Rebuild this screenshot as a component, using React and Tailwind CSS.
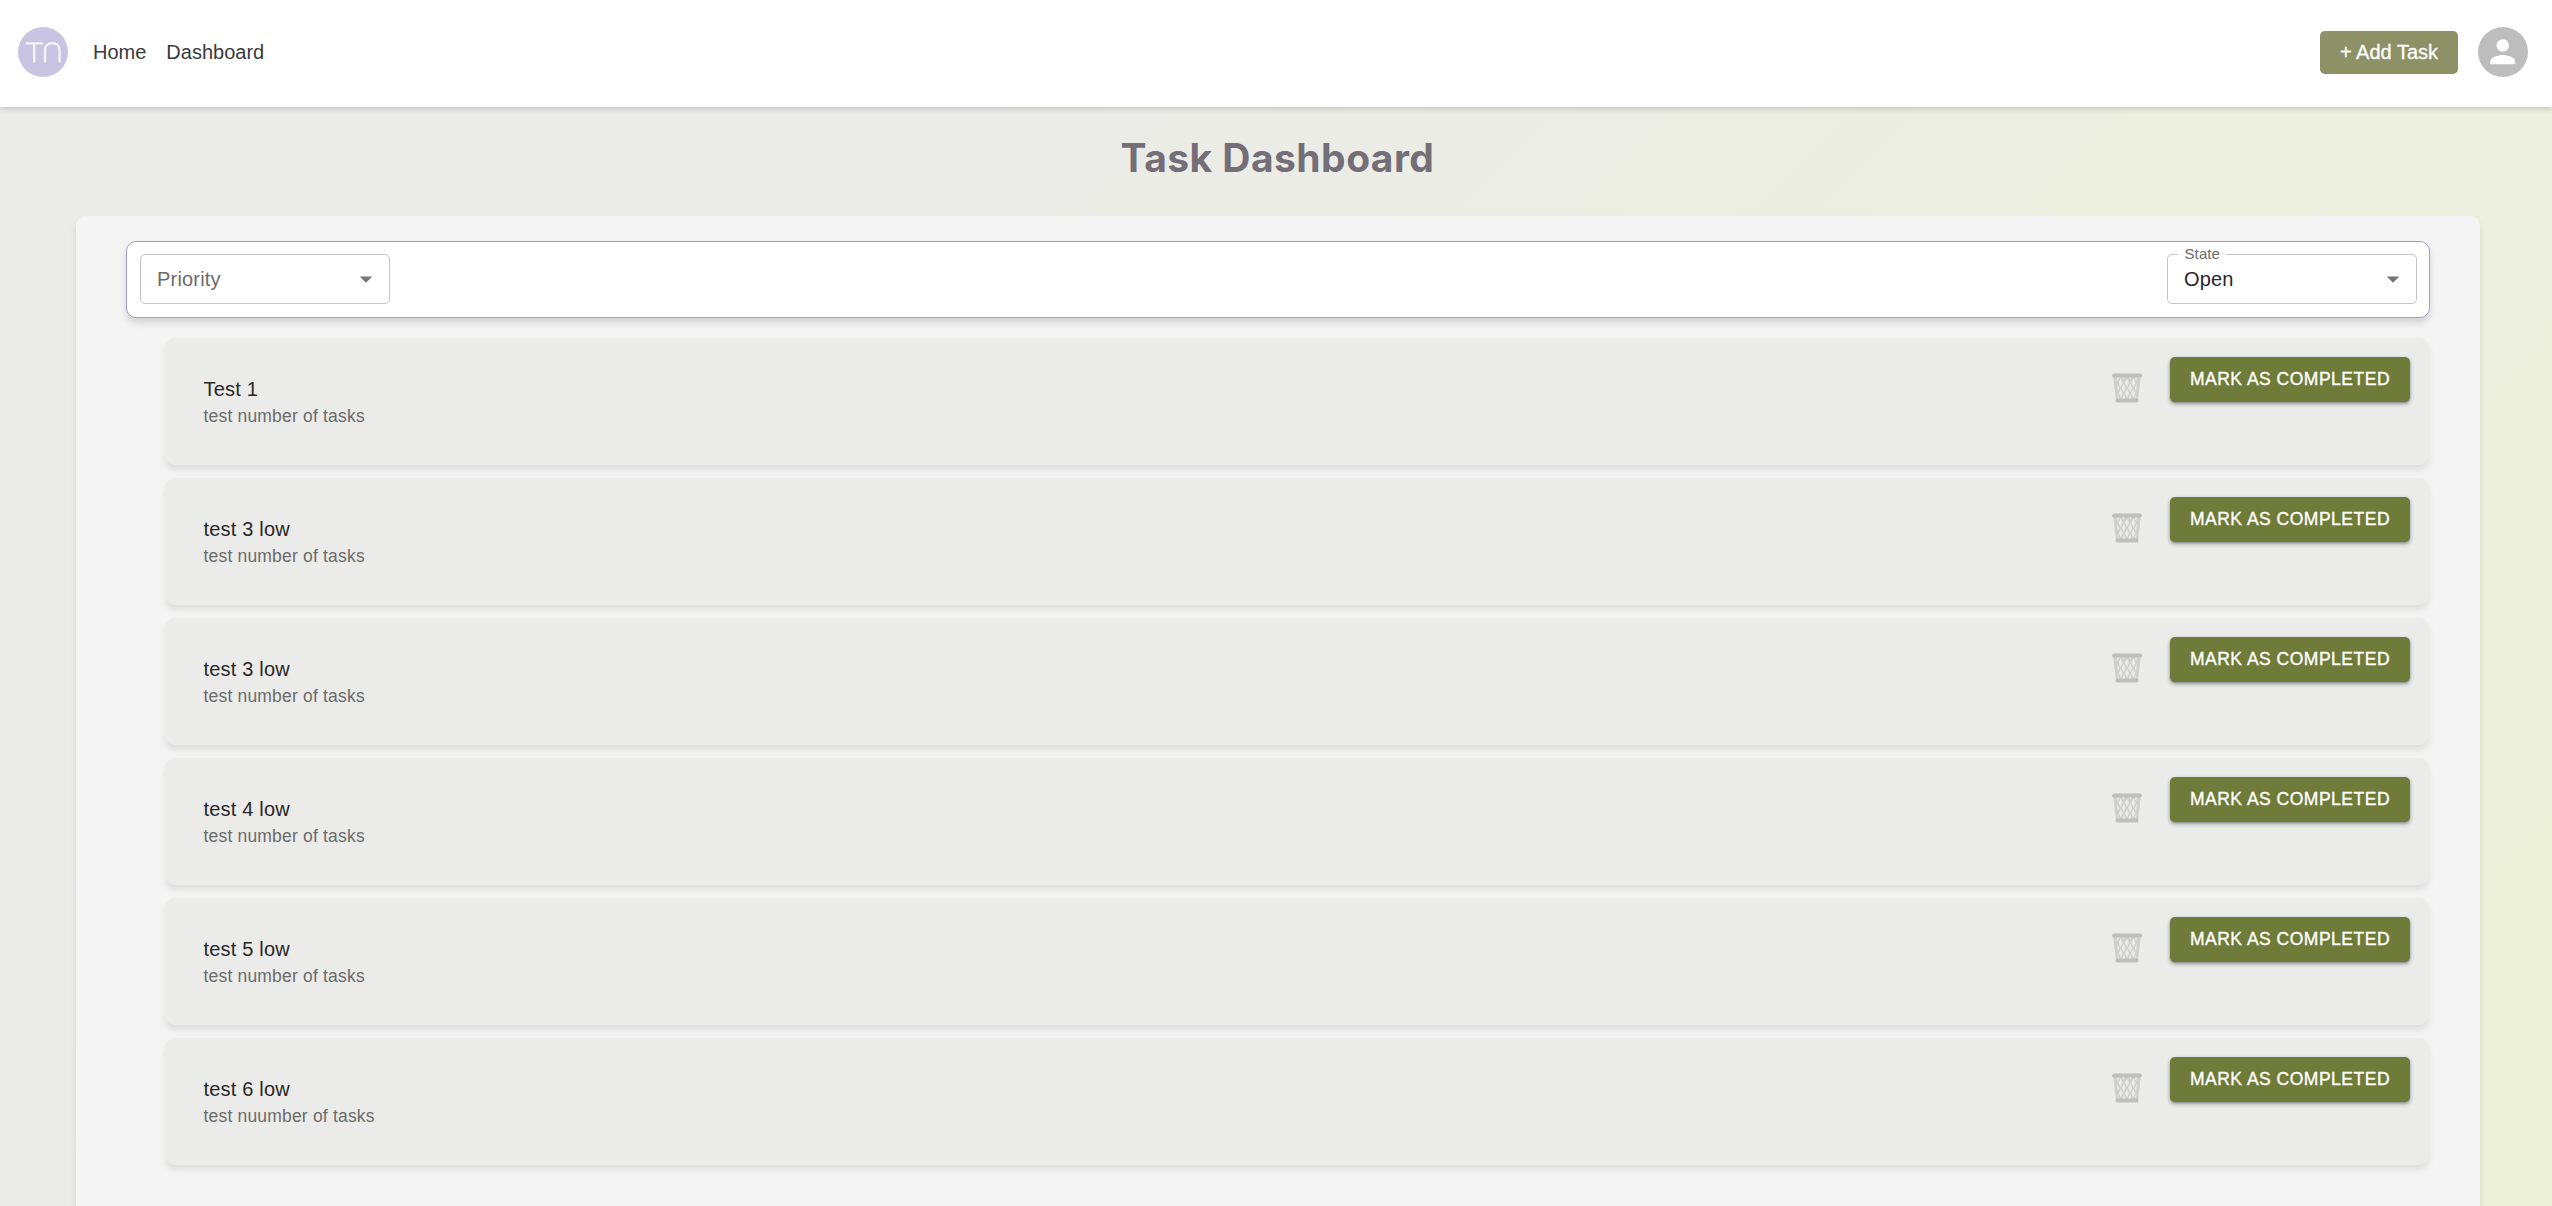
const tasks = [
  { title: 'Test 1', note: 'test number of tasks' },
  { title: 'test 3 low', note: 'test number of tasks' },
  { title: 'test 3 low', note: 'test number of tasks' },
  { title: 'test 4 low', note: 'test number of tasks' },
  { title: 'test 5 low', note: 'test number of tasks' },
  { title: 'test 6 low', note: 'test nuumber of tasks' },
];

function Logo() {
  return (
    <svg className="size-[50px]" viewBox="0 0 50 50" fill="none">
      <circle cx="25" cy="25" r="25" fill="#cac4e3" />
      <path
        d="M8.500 16.300H24M16.200 16.300V34.500M27 34.500V23.500C27 18.800 30.200 16.200 34.300 16.200S41.600 18.800 41.600 23.500V34.500"
        stroke="#f6f4fc"
        strokeWidth="2.3"
        strokeLinecap="round"
      />
    </svg>
  );
}

function Avatar() {
  return (
    <div className="flex size-[50px] items-center justify-center rounded-full bg-[#bdbdbd]">
      <svg className="size-[37.5px]" viewBox="0 0 24 24" fill="#fff">
        <path d="M12 12c2.210 0 4-1.790 4-4s-1.790-4-4-4-4 1.790-4 4 1.790 4 4 4m0 2c-2.670 0-8 1.340-8 4v2h16v-2c0-2.660-5.330-4-8-4" />
      </svg>
    </div>
  );
}

function Trash() {
  return (
    <svg className="mt-4 size-[30px]" viewBox="0 0 30 30" fill="none">
      <path d="M1.200 3.500L4 27H26L28.800 3.500Z" fill="#cfcfce" />
      <g fill="#ebebe9">
        <path d="M4.600 4h2.800l-1.600 4z M10 4h3l-1.500 2.600z M16.800 4h3l-1.500 2.600z M22.600 4h2.800l-1.200 4z" />
        <path d="M8.600 5.500l2 4.200-2 4.200-2-4.200z M15 5.500l2 4.200-2 4.200-2-4.200z M21.400 5.500l2 4.200-2 4.200-2-4.200z" />
        <path d="M11.800 10.700l2 4.200-2 4.200-2-4.200z M18.200 10.700l2 4.200-2 4.200-2-4.200z M5.100 10.500l2.300 4.400-1.500 3.600z M24.900 10.500l-2.300 4.400 1.500 3.600z" />
        <path d="M8.800 16l2 4.200-2 4.200-2-4.200z M15 16l2 4.200-2 4.200-2-4.200z M21.200 16l2 4.200-2 4.200-2-4.200z" />
        <path d="M11.900 21.500l1.700 4.500h-3.400z M18.100 21.500l1.700 4.500h-3.400z M6.200 21.500l1.500 4.500h-1.200z M23.800 21.500l-1.500 4.500h1.200z" />
      </g>
      <rect x="0" y="0.500" width="30" height="4" rx="2" fill="#bebebd" />
      <rect x="3.500" y="25.500" width="23" height="4" rx="2" fill="#bebebd" />
    </svg>
  );
}

function Caret() {
  return (
    <svg className="size-[30px]" viewBox="0 0 24 24" fill="#757575">
      <path d="M7 10l5 5 5-5z" />
    </svg>
  );
}

function Select({ label, value }) {
  return (
    <div className="relative flex h-[50px] w-[250px] items-center justify-between rounded-[5px] border border-[#c4c4c4] pr-[8px] pl-[16px]">
      {value ? (
        <>
          <span className="absolute top-[-11px] left-[10px] bg-white pr-[6px] pl-[6.5px] text-[15px] leading-5 tracking-[0.007em] text-[#6b6b6b]">
            {label}
          </span>
          <span className="text-[20px] tracking-[0.00938em] text-[#282828]">{value}</span>
        </>
      ) : (
        <span className="text-[20px] tracking-[0.00938em] text-[#6b6b6b]">{label}</span>
      )}
      <Caret />
    </div>
  );
}

function TaskCard({ title, note }) {
  return (
    <li className="flex h-[127px] justify-between rounded-[10px] bg-[#ebebe9] pr-[19px] pl-[38.5px] shadow-[0_5px_7.5px_rgba(0,0,0,0.09)]">
      <div className="pt-[36.3px]">
        <p className="text-[20px] leading-[30px] tracking-[0.00938em] text-[#282828]">{title}</p>
        <p className="text-[17.5px] leading-[25px] tracking-[0.01071em] text-[#6b6b6b]">{note}</p>
      </div>
      <div className="flex items-start gap-7 pt-[18.8px]">
        <Trash />
        <button className="h-[45.6px] w-[240px] rounded-[5px] bg-[#6f7b38] pb-px text-center text-[17.5px] whitespace-nowrap tracking-[0.02857em] text-white shadow-[0_2px_4px_rgba(0,0,0,0.32),0_1px_2px_rgba(0,0,0,0.2)] [-webkit-text-stroke:0.35px_white]">
          MARK AS COMPLETED
        </button>
      </div>
    </li>
  );
}

export default function App() {
  return (
    <div className="flex h-[1206px] flex-col overflow-hidden bg-[linear-gradient(135deg,#ebebe9_25%,#edf1d9_93%)] font-['Liberation_Sans',sans-serif]">
      <header className="relative flex h-[107px] shrink-0 items-center justify-between bg-white pr-6 pb-[3px] pl-[18px] shadow-[0_2px_5px_rgba(0,0,0,0.16)]">
        <nav className="flex items-center text-[20px] text-[#3a3a3a]">
          <Logo />
          <a className="ml-[25px]">Home</a>
          <a className="ml-5">Dashboard</a>
        </nav>
        <div className="flex items-center gap-5">
          <button className="h-[43px] w-[138px] rounded-[5px] bg-[#8c9166] text-[20px] text-white [-webkit-text-stroke:0.3px_white]">
            + Add Task
          </button>
          <Avatar />
        </div>
      </header>
      <h1 className="mt-[21px] ml-[3px] text-center font-['Inter',sans-serif] text-[39px] leading-[60px] font-bold tracking-[0.45px] text-[#736e77]">
        Task Dashboard
      </h1>
      <main className="mt-7 mr-[72px] ml-[76px] grow rounded-t-[10px] bg-[#f4f4f4] px-[50px] pt-[25px] shadow-[0_5px_7.5px_rgba(0,0,0,0.1)]">
        <section className="flex h-[77px] items-center justify-between rounded-[10px] border border-[#a39cc4] bg-white pr-[12px] pb-px pl-[13px] shadow-[0_5px_7.5px_rgba(0,0,0,0.13)]">
          <Select label="Priority" />
          <Select label="State" value="Open" />
        </section>
        <ul className="mt-[19.75px] flex flex-col gap-[13.06px] pr-px pl-[39px]">
          {tasks.map((task, i) => (
            <TaskCard key={i} {...task} />
          ))}
        </ul>
      </main>
    </div>
  );
}
